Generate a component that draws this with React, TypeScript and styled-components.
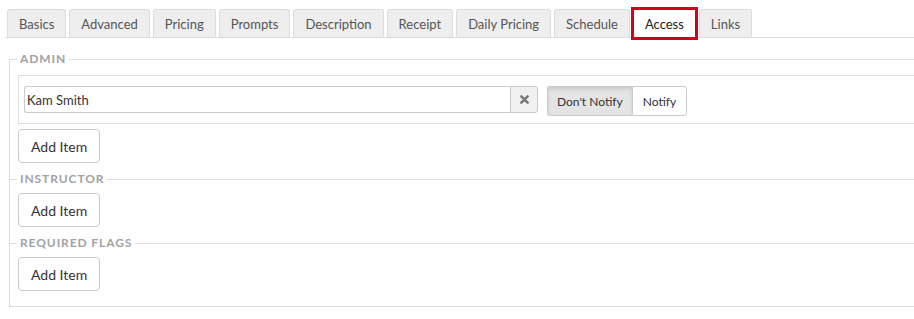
import React, { useState } from "react";
import styled, { createGlobalStyle } from "styled-components";

const GlobalStyle = createGlobalStyle`
  html, body {
    margin: 0;
    padding: 0;
    background: #fff;
    overflow: hidden;
  }
  body {
    font-family: Lato, "Open Sans", "Liberation Sans", sans-serif;
    color: #333;
  }
`;

const Page = styled.div`
  width: 960px;
`;

const TabBar = styled.ul`
  display: flex;
  gap: 3px;
  list-style: none;
  margin: 0 0 0 5px;
  padding: 9px 0 0 2px;
  border-bottom: 1px solid #ddd;
`;

const Tab = styled.li<{ active?: boolean }>`
  height: 27px;
  padding: 0 11px;
  display: flex;
  align-items: center;
  font-size: 13px;
  color: ${({ active }) => (active ? "#222" : "#555")};
  background: ${({ active }) => (active ? "#fff" : "#eee")};
  border: 1px solid #ddd;
  border-bottom: ${({ active }) => (active ? "1px solid #fff" : "0")};
  border-radius: ${({ active }) => (active ? "0" : "3px 3px 0 0")};
  margin-bottom: ${({ active }) => (active ? "-1px" : "0")};
  outline: ${({ active }) => (active ? "3px solid #d0021b" : "none")};
  outline-offset: -1px;
  cursor: pointer;
`;

const Form = styled.div`
  margin: 14px -30px 0 9px;
`;

const Group = styled.fieldset<{ last?: boolean; first?: boolean }>`
  margin: ${({ first }) => (first ? "0" : "-7px 0 0 0")};
  padding: 0 0 ${({ last }) => (last ? "15px" : "16px")} 8px;
  border: 1px solid #ddd;
  border-right: 0;
  border-bottom: ${({ last }) => (last ? "1px solid #ddd" : "0")};
  min-width: 0;
`;

const Legend = styled.legend`
  padding: 0 3px;
  margin-left: -1px;
  font-size: 12px;
  line-height: 14px;
  font-weight: 700;
  letter-spacing: 0.9px;
  color: #a2a2a2;
  text-transform: uppercase;
`;

const Body = styled.div`
  padding-top: 7px;
  display: flex;
  flex-direction: column;
  align-items: flex-start;
`;

const ItemBox = styled.div`
  align-self: stretch;
  display: flex;
  align-items: flex-start;
  gap: 9px;
  padding: 10px 5px 7px 5px;
  margin: 2px 0 5px 0;
  border: 1px solid #ddd;
  border-right: 0;
`;

const InputGroup = styled.div`
  display: flex;
  height: 27px;
`;

const TextInput = styled.input`
  width: 486px;
  box-sizing: border-box;
  height: 27px;
  border: 1px solid #ccc;
  border-right: 0;
  border-radius: 3px 0 0 3px;
  padding: 0 2px;
  font-family: inherit;
  font-size: 13px;
  color: #333;
  outline: none;
`;

const ClearButton = styled.button`
  width: 28px;
  height: 27px;
  box-sizing: border-box;
  display: flex;
  align-items: center;
  justify-content: center;
  background: #f0f0f0;
  border: 1px solid #ccc;
  border-radius: 0 3px 3px 0;
  padding: 0;
  cursor: pointer;
`;

const Toggle = styled.div`
  display: flex;
`;

const ToggleButton = styled.button<{ active?: boolean }>`
  height: 30px;
  padding: 0 9px;
  font-family: inherit;
  font-size: 12px;
  color: #333;
  background: ${({ active }) => (active ? "#e4e4e4" : "#fff")};
  box-shadow: ${({ active }) =>
    active ? "inset 0 2px 4px rgba(0,0,0,0.12)" : "none"};
  border: 1px solid #ccc;
  cursor: pointer;
  &:first-child {
    border-radius: 3px 0 0 3px;
    border-right: 0;
  }
  &:last-child {
    border-radius: 0 3px 3px 0;
    padding: 0 10px;
  }
`;

const AddButton = styled.button`
  height: 34px;
  padding: 0 12px;
  font-family: inherit;
  font-size: 14px;
  color: #333;
  background: #fff;
  border: 1px solid #ccc;
  border-radius: 4px;
  cursor: pointer;
`;

const tabs = [
  "Basics",
  "Advanced",
  "Pricing",
  "Prompts",
  "Description",
  "Receipt",
  "Daily Pricing",
  "Schedule",
  "Access",
  "Links",
];

function ClearIcon() {
  return (
    <svg width="9" height="9" viewBox="0 0 10 10">
      <path
        d="M1.5 1.5 L8.5 8.5 M8.5 1.5 L1.5 8.5"
        stroke="#777"
        strokeWidth="2.8"
        strokeLinecap="round"
      />
    </svg>
  );
}

export default function App() {
  const [active, setActive] = useState("Access");
  const [notify, setNotify] = useState(false);

  return (
    <Page>
      <GlobalStyle />
      <TabBar>
        {tabs.map((t) => (
          <Tab key={t} active={t === active} onClick={() => setActive(t)}>
            {t}
          </Tab>
        ))}
      </TabBar>
      <Form>
        <Group first>
          <Legend>Admin</Legend>
          <Body>
            <ItemBox>
              <InputGroup>
                <TextInput defaultValue="Kam Smith" />
                <ClearButton>
                  <ClearIcon />
                </ClearButton>
              </InputGroup>
              <Toggle>
                <ToggleButton active={!notify} onClick={() => setNotify(false)}>
                  Don't Notify
                </ToggleButton>
                <ToggleButton active={notify} onClick={() => setNotify(true)}>
                  Notify
                </ToggleButton>
              </Toggle>
            </ItemBox>
            <AddButton>Add Item</AddButton>
          </Body>
        </Group>
        <Group>
          <Legend>Instructor</Legend>
          <Body>
            <AddButton>Add Item</AddButton>
          </Body>
        </Group>
        <Group last>
          <Legend>Required Flags</Legend>
          <Body>
            <AddButton>Add Item</AddButton>
          </Body>
        </Group>
      </Form>
    </Page>
  );
}
